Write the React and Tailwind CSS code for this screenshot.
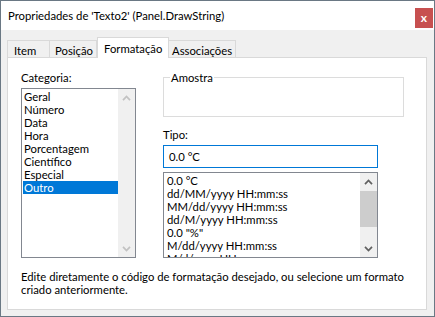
import React from "react";

const categories = [
  "Geral",
  "Número",
  "Data",
  "Hora",
  "Porcentagem",
  "Científico",
  "Especial",
  "Outro",
];

const formats = [
  "0.0 °C",
  "dd/MM/yyyy HH:mm:ss",
  "MM/dd/yyyy HH:mm:ss",
  "dd/M/yyyy HH:mm:ss",
  '0.0 "%"',
  "M/dd/yyyy HH:mm:ss",
  "M/d/yyyy HH:mm:ss",
];

// small chevron used by the scrollbar arrows
const Chevron = ({ up, color }) => (
  <svg width="9" height="6" viewBox="0 0 9 6">
    <path
      d={up ? "M1 5.2 L4.5 1.5 L8 5.2" : "M1 0.8 L4.5 4.5 L8 0.8"}
      fill="none"
      stroke={color}
      strokeWidth="1.7"
    />
  </svg>
);

const ScrollBar = ({ disabled }) => {
  const color = disabled ? "#c2c2c2" : "#606060";
  return (
    <div className="w-[17px] h-full bg-[#f0f0f0] flex flex-col shrink-0">
      <div className="h-[17px] flex items-center justify-center">
        <Chevron up color={color} />
      </div>
      <div className="flex-1 flex flex-col">
        {!disabled && <div className="h-[36px] mt-[1px] bg-[#cdcdcd]" />}
      </div>
      <div className="h-[17px] flex items-center justify-center">
        <Chevron color={color} />
      </div>
    </div>
  );
};

const tabs = [
  { label: "Item", cls: "w-[43px] pl-[6px] border-l border-r" },
  { label: "Posição", cls: "w-[47px] pl-[5px] border-r" },
  { label: "Formatação", selected: true },
  { label: "Associações", cls: "w-[67px] pl-[3px] border-r" },
];

export default function App() {
  return (
    <div className="w-[435px] h-[317px] border border-[#6a7884] bg-[#f0f0f0] flex flex-col font-['Lato',sans-serif] text-[11.3px] text-black overflow-hidden">
      {/* title bar */}
      <div className="h-[29px] bg-white flex items-start justify-between shrink-0">
        <span className="pl-[7px] pt-[7px] leading-[15px]">
          Propriedades de 'Texto2' (Panel.DrawString)
        </span>
        <div className="w-[18px] h-[20px] mt-[7px] mr-[1px] bg-[#c75050] text-white font-bold flex items-center justify-center leading-none text-[12px]">
          x
        </div>
      </div>

      {/* tabs */}
      <div className="h-[27px] pt-[7px] pl-[6px] flex items-end shrink-0">
        {tabs.map((t) =>
          t.selected ? (
            <div
              key={t.label}
              className="relative z-10 -mb-px w-[72px] h-[21px] pl-[6px] bg-white border-t border-l border-r border-[#d9d9d9] flex items-center leading-[15px]"
            >
              {t.label}
            </div>
          ) : (
            <div
              key={t.label}
              className={`${t.cls} h-[17px] pt-[2px] border-t border-[#d9d9d9] bg-[#f0f0f0] flex items-center leading-[15px]`}
            >
              {t.label}
            </div>
          )
        )}
      </div>

      {/* panel */}
      <div className="mx-[6px] w-[420px] h-[253px] bg-white border border-[#d9d9d9] flex flex-col">
        <div className="flex pl-[13px] pt-[12px]">
          {/* left part */}
          <div className="w-[115px] flex flex-col">
            <span className="h-[15px] leading-[15px]">Categoria:</span>
            <div className="mt-[3px] h-[170px] border border-[#828790] flex">
              <div className="flex-1 flex flex-col pt-[1px]">
                {categories.map((c) => (
                  <div
                    key={c}
                    className={`h-[13px] leading-[13px] ml-[1px] pl-[1px] ${
                      c === "Outro" ? "bg-[#0078d7] text-white" : ""
                    }`}
                  >
                    {c}
                  </div>
                ))}
              </div>
              <ScrollBar disabled />
            </div>
          </div>

          {/* right part */}
          <div className="ml-[27px] flex flex-col">
            <div className="relative mt-[7px] w-[241px] h-[40px] border border-[#dcdcdc]">
              <span className="absolute left-[6px] top-[-8px] px-[1px] bg-white leading-[15px]">
                Amostra
              </span>
            </div>
            <span className="mt-[10px] h-[15px] leading-[15px]">Tipo:</span>
            <div className="mt-[3px] w-[215px] h-[23px] border border-[#0078d7] flex items-center pl-[5px] leading-[15px]">
              0.0 °C
            </div>
            <div className="mt-[4px] w-[215px] h-[86px] border border-[#828790] flex">
              <div className="flex-1 flex flex-col pt-[1px] pl-[3px] overflow-hidden">
                {formats.map((f) => (
                  <div key={f} className="h-[13px] leading-[13px] shrink-0 whitespace-nowrap">
                    {f}
                  </div>
                ))}
              </div>
              <ScrollBar />
            </div>
          </div>
        </div>

        <p className="mt-[12px] pl-[13px] leading-[13px] whitespace-nowrap">
          Edite diretamente o código de formatação desejado, ou selecione um formato
          <br />
          criado anteriormente.
        </p>
      </div>
    </div>
  );
}
